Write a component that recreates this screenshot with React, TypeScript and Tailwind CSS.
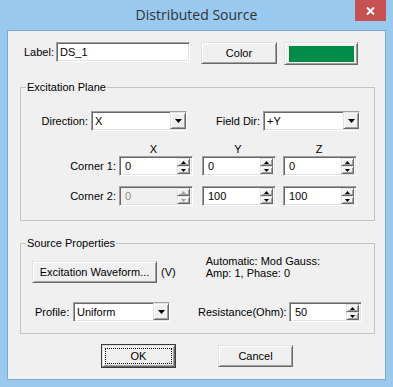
import React from "react";

const sunken =
  "border border-t-[#a0a0a0] border-l-[#a0a0a0] border-b-white border-r-white shadow-[inset_1px_1px_0_#696969,inset_-1px_-1px_0_#e3e3e3]";
const raised =
  "border border-t-[#e3e3e3] border-l-[#e3e3e3] border-b-[#696969] border-r-[#696969] shadow-[inset_1px_1px_0_#fff,inset_-1px_-1px_0_#a0a0a0]";

const DownArrow = () => (
  <svg width="7" height="4" viewBox="0 0 7 4">
    <polygon points="0,0 7,0 3.5,4" fill="#000" />
  </svg>
);

const SpinButton = ({ up, disabled }: { up?: boolean; disabled?: boolean }) => (
  <div
    className={`w-[13px] h-[8px] bg-[#f0f0f0] flex items-center justify-center ${raised}`}
  >
    <svg width="5" height="3" viewBox="0 0 5 3">
      <polygon
        points={up ? "0,3 5,3 2.5,0" : "0,0 5,0 2.5,3"}
        fill={disabled ? "#a0a0a0" : "#000"}
      />
    </svg>
  </div>
);

const Spin = ({
  value,
  width,
  disabled,
}: {
  value: string;
  width: string;
  disabled?: boolean;
}) => (
  <div
    className={`flex items-center h-[20px] ${width} ${sunken} ${
      disabled ? "bg-[#f0f0f0] text-[#8a8a8a]" : "bg-white"
    }`}
  >
    <span className="flex-1 pl-[5px]">{value}</span>
    <div className="flex flex-col mr-[2px]">
      <SpinButton up disabled={disabled} />
      <SpinButton disabled={disabled} />
    </div>
  </div>
);

const Combo = ({ value, width }: { value: string; width: string }) => (
  <div className={`flex h-[20px] bg-white ${width} ${sunken}`}>
    <span className="flex-1 pl-[3px] flex items-center">{value}</span>
    <div
      className={`w-[16px] h-[17px] bg-[#f0f0f0] flex items-center justify-center ${raised}`}
    >
      <DownArrow />
    </div>
  </div>
);

const Group = ({
  title,
  height,
  children,
}: {
  title: string;
  height: string;
  children: React.ReactNode;
}) => (
  <div className={`ml-[12px] w-[355px] ${height} border border-[#c4c4c4]`}>
    <span className="block w-fit -mt-[7px] ml-[5px] px-[1px] leading-[13px] bg-[#f0f0f0]">
      {title}
    </span>
    {children}
  </div>
);

export default function App() {
  return (
    <div className="w-[393px] h-[387px] bg-[#99c9ef] flex flex-col font-['Liberation_Sans',Arial,sans-serif] text-[11px] text-black">
      {/* title bar */}
      <div className="h-[30px] grid grid-cols-[1fr_auto_1fr]">
        <div />
        <div className="flex items-center text-[14px] text-[#333] font-['Open_Sans',sans-serif] leading-[20px]">
          Distributed Source
        </div>
        <div className="flex justify-end items-start">
          <div className="w-[31px] h-[21px] mr-[7px] bg-[#c75050] flex items-center justify-center">
            <svg width="9" height="8" viewBox="0 0 9 8">
              <path d="M1 0.5 L8 7.5 M8 0.5 L1 7.5" stroke="#fff" strokeWidth="2" />
            </svg>
          </div>
        </div>
      </div>

      {/* client area */}
      <div className="ml-[7px] w-[379px] h-[350px] border border-[#83a8c8] bg-[#f0f0f0] flex flex-col">
        {/* label row */}
        <div className="flex items-start mt-[11px] ml-[16px]">
          <span className="w-[32px] h-[20px] flex items-center">Label:</span>
          <div className={`w-[134px] h-[20px] bg-white pl-[3px] flex items-center ${sunken}`}>
            DS_1
          </div>
          <div
            className={`ml-[11px] w-[76px] h-[22px] bg-[#f0f0f0] flex items-center justify-center ${raised}`}
          >
            Color
          </div>
          <div
            className={`ml-[7px] w-[74px] h-[23px] bg-[#f0f0f0] pt-[3px] pl-[4px] pr-[3px] pb-[2px] ${raised}`}
          >
            <div className="w-full h-full bg-[#008c46]" />
          </div>
        </div>

        {/* excitation plane */}
        <div className="mt-[22px]">
          <Group title="Excitation Plane" height="h-[134px]">
            <div className="flex items-center mt-[17px]">
              <span className="w-[67px] text-right">Direction:</span>
              <div className="ml-[3px]">
                <Combo value="X" width="w-[96px]" />
              </div>
              <span className="w-[73px] text-right">Field Dir:</span>
              <div className="ml-[3px]">
                <Combo value="+Y" width="w-[97px]" />
              </div>
            </div>

            <div className="flex mt-[12px] leading-[12px]">
              <span className="ml-[98px] w-[69px] text-center">X</span>
              <span className="ml-[14px] w-[72px] text-center">Y</span>
              <span className="ml-[9px] w-[72px] text-center">Z</span>
            </div>

            <div className="flex items-center mt-[1px]">
              <span className="w-[95px] text-right">Corner 1:</span>
              <div className="ml-[3px]">
                <Spin value="0" width="w-[74px]" />
              </div>
              <div className="ml-[9px]">
                <Spin value="0" width="w-[74px]" />
              </div>
              <div className="ml-[7px]">
                <Spin value="0" width="w-[74px]" />
              </div>
            </div>

            <div className="flex items-center mt-[10px]">
              <span className="w-[95px] text-right">Corner 2:</span>
              <div className="ml-[3px]">
                <Spin value="0" width="w-[74px]" disabled />
              </div>
              <div className="ml-[9px]">
                <Spin value="100" width="w-[74px]" />
              </div>
              <div className="ml-[7px]">
                <Spin value="100" width="w-[74px]" />
              </div>
            </div>
          </Group>
        </div>

        {/* source properties */}
        <div className="mt-[22px]">
          <Group title="Source Properties" height="h-[91px]">
            <div className="flex items-start mt-[5px]">
              <div className="flex items-center mt-[6px] ml-[11px]">
                <div
                  className={`w-[125px] h-[22px] bg-[#f0f0f0] flex items-center justify-center ${raised}`}
                >
                  Excitation Waveform...
                </div>
                <span className="ml-[4px]">(V)</span>
              </div>
              <div className="ml-[30px] flex flex-col leading-[12px]">
                <span>Automatic: Mod Gauss:</span>
                <span>Amp: 1, Phase: 0</span>
              </div>
            </div>

            <div className="flex items-center mt-[19px]">
              <span className="ml-[14px] w-[35px]">Profile:</span>
              <div className="ml-[3px]">
                <Combo value="Uniform" width="w-[97px]" />
              </div>
              <span className="ml-[28px] w-[88px]">Resistance(Ohm):</span>
              <div className="ml-[3px]">
                <Spin value="50" width="w-[73px]" />
              </div>
            </div>
          </Group>
        </div>

        {/* dialog buttons */}
        <div className="flex items-start mt-[10px] ml-[93px]">
          <div className="w-[75px] h-[24px] border border-[#3c3c3c]">
            <div className={`w-full h-full bg-[#f0f0f0] p-[2px] ${raised}`}>
              <div className="w-full h-full border border-dotted border-black flex items-center justify-center">
                OK
              </div>
            </div>
          </div>
          <div
            className={`ml-[42px] mt-[1px] w-[75px] h-[22px] bg-[#f0f0f0] flex items-center justify-center ${raised}`}
          >
            Cancel
          </div>
        </div>
      </div>
    </div>
  );
}
